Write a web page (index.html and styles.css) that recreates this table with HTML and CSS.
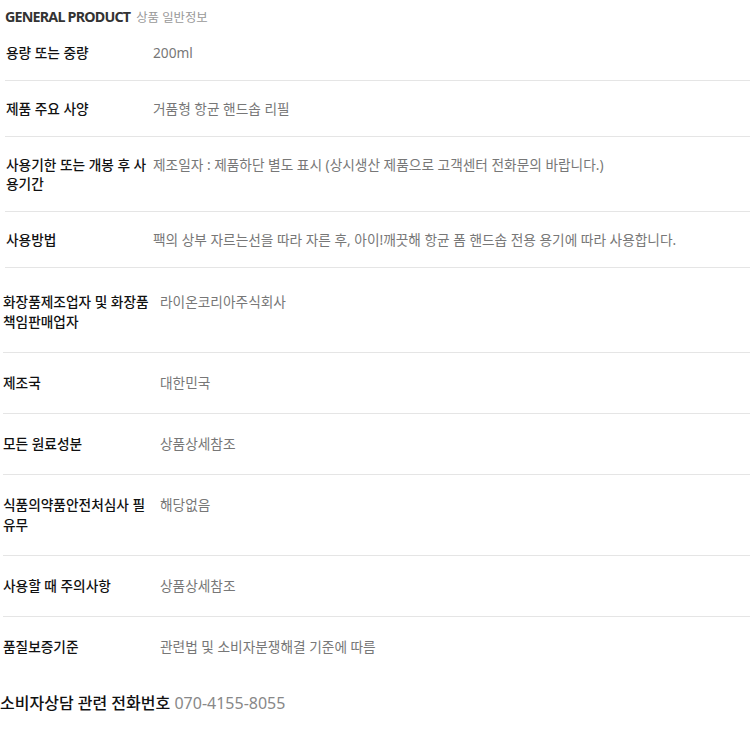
FILE: index.html
```html
<!DOCTYPE html>
<html lang="ko">
<head>
  <meta charset="UTF-8">
  <title>상품 일반정보</title>
  <link rel="stylesheet" href="styles.css">
</head>
<body>
  <div class="info">
    <h2 class="title">GENERAL PRODUCT <span>상품 일반정보</span></h2>

    <table class="spec spec-a">
      <tr><th>용량 또는 중량</th><td>200ml</td></tr>
      <tr><th>제품 주요 사양</th><td>거품형 항균 핸드솝 리필</td></tr>
      <tr><th>사용기한 또는 개봉 후 사용기간</th><td>제조일자 : 제품하단 별도 표시 (상시생산 제품으로 고객센터 전화문의 바랍니다.)</td></tr>
      <tr><th>사용방법</th><td>팩의 상부 자르는선을 따라 자른 후, 아이!깨끗해 항균 폼 핸드솝 전용 용기에 따라 사용합니다.</td></tr>
    </table>

    <table class="spec spec-b">
      <tr><th>화장품제조업자 및 화장품 책임판매업자</th><td>라이온코리아주식회사</td></tr>
      <tr><th>제조국</th><td>대한민국</td></tr>
      <tr><th>모든 원료성분</th><td>상품상세참조</td></tr>
      <tr><th>식품의약품안전처심사 필 유무</th><td>해당없음</td></tr>
      <tr><th>사용할 때 주의사항</th><td>상품상세참조</td></tr>
      <tr><th>품질보증기준</th><td>관련법 및 소비자분쟁해결 기준에 따름</td></tr>
    </table>

    <p class="phone"><strong>소비자상담 관련 전화번호</strong> <span>070-4155-8055</span></p>
  </div>
</body>
</html>
```

FILE: styles.css
```css
body {
  margin: 0;
  background: #fff;
  font-family: "Noto Sans", "Noto Sans CJK KR", sans-serif;
  color: #222;
}
.info {
  width: 750px;
}
.title {
  margin: 0;
  padding: 8px 5px 0;
  height: 17px;
  font-size: 14.3px;
  line-height: 17px;
  font-weight: 700;
  color: #333;
  letter-spacing: -0.8px;
}
.title span {
  font-size: 12.4px;
  font-weight: 400;
  color: #999;
  letter-spacing: 0;
  margin-left: 3px;
}
.spec {
  border-collapse: collapse;
  font-size: 13.7px;
}
.spec th {
  text-align: left;
  font-weight: 500;
  vertical-align: top;
  color: #111;
}
.spec td {
  color: #777;
  vertical-align: top;
}
.spec-a {
  margin-left: 5px;
  width: 745px;
}
.spec-a th,
.spec-a td {
  padding: 18px 0 18px;
  line-height: 19px;
  border-bottom: 1px solid #e5e5e5;
}
.spec-a th {
  width: 146px;
  padding-left: 1px;
  padding-right: 1px;
}
.spec-b {
  margin: 4px 0 0 3px;
  width: 747px;
}
.spec-b th,
.spec-b td {
  padding: 20px 0;
  line-height: 20px;
  border-bottom: 1px solid #e5e5e5;
}
.spec-b th {
  width: 154px;
  padding-right: 3px;
}
.spec-b tr:last-child th,
.spec-b tr:last-child td {
  border-bottom: none;
}
.phone {
  margin: 15px 0 0;
  font-size: 16px;
  line-height: 22px;
}
.phone strong {
  font-weight: 500;
  color: #111;
}
.phone span {
  color: #888;
}
```
